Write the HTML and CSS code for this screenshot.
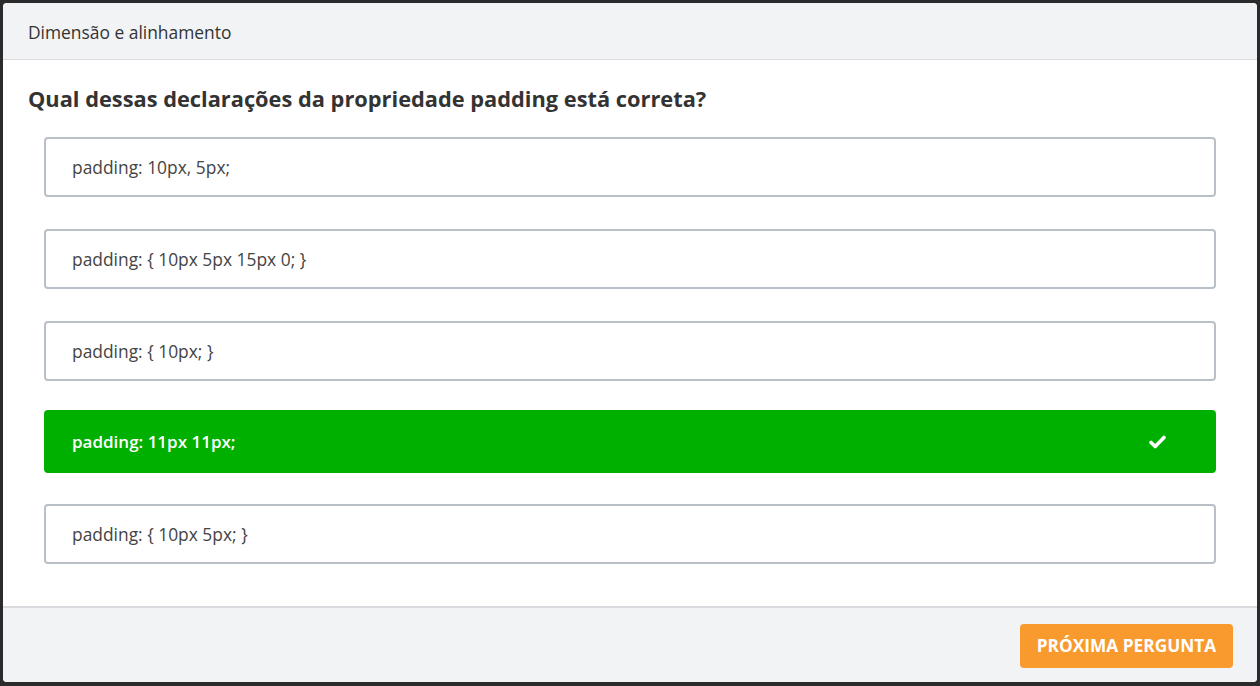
FILE: index.html
```html
<!DOCTYPE html>
<html lang="pt">
<head>
<meta charset="utf-8">
<link rel="stylesheet" href="styles.css">
</head>
<body>
<div class="panel">
  <div class="panel-header">Dimensão e alinhamento</div>
  <div class="panel-body">
    <h2 class="question">Qual dessas declarações da propriedade padding está correta?</h2>
    <ul class="options">
      <li class="option">padding: 10px, 5px;</li>
      <li class="option">padding: { 10px 5px 15px 0; }</li>
      <li class="option">padding: { 10px; }</li>
      <li class="option correct">padding: 11px 11px;
        <svg class="check" width="17" height="14" viewBox="0 0 17 14"><path d="M2 7.5 L6.2 11.5 L15 2.5" fill="none" stroke="#fff" stroke-width="3.6" stroke-linecap="round" stroke-linejoin="round"/></svg>
      </li>
      <li class="option">padding: { 10px 5px; }</li>
    </ul>
  </div>
  <div class="panel-footer">
    <button class="next">PRÓXIMA PERGUNTA</button>
  </div>
</div>
</body>
</html>
```
FILE: styles.css
```css
html, body {
  margin: 0;
  padding: 0;
  height: 100%;
}
body {
  background: #2b2b2b;
  padding: 3px 3px 4px 3px;
  box-sizing: border-box;
  font-family: "Open Sans", "Liberation Sans", sans-serif;
  color: #333;
}
.panel {
  height: 100%;
  background: #fff;
  border-radius: 4px;
  overflow: hidden;
  display: flex;
  flex-direction: column;
}
.panel-header {
  background: #f2f3f5;
  border-bottom: 1px solid #d9dbde;
  height: 57px;
  box-sizing: border-box;
  padding-left: 25px;
  padding-top: 2px;
  display: flex;
  align-items: center;
  font-size: 17.4px;
  color: #333;
}
.panel-body {
  flex: 1;
  padding: 0 41px 0 25px;
}
.question {
  margin: 23px 0 0 0;
  font-size: 21.8px;
  font-weight: 700;
  color: #333;
  line-height: 32px;
}
.options {
  list-style: none;
  margin: 22px 0 0 16px;
  padding: 0;
  display: flex;
  flex-direction: column;
  gap: 32px;
}
.option {
  height: 60px;
  box-sizing: border-box;
  border: 2px solid #b9bfc6;
  border-radius: 4px;
  padding: 0 48px 0 26px;
  display: flex;
  align-items: center;
  justify-content: space-between;
  font-size: 17.4px;
  color: #444;
}
.option.correct {
  background: #00b000;
  border-color: #00b000;
  color: #fff;
  font-weight: 600;
  font-size: 17px;
  height: 63px;
  margin: -3px 0 -1px 0;
}
.panel-footer {
  background: #f2f3f5;
  border-top: 2px solid #d9dbde;
  height: 76px;
  box-sizing: border-box;
  display: flex;
  align-items: center;
  justify-content: flex-end;
  padding-right: 24px;
}
.next {
  background: #f99a2f;
  border: none;
  border-radius: 4px;
  color: #fff;
  font-family: "Open Sans", "Liberation Sans", sans-serif;
  font-weight: 700;
  font-size: 17.3px;
  height: 44px;
  width: 213px;
  padding: 0;
  margin-top: 1px;
}
```
